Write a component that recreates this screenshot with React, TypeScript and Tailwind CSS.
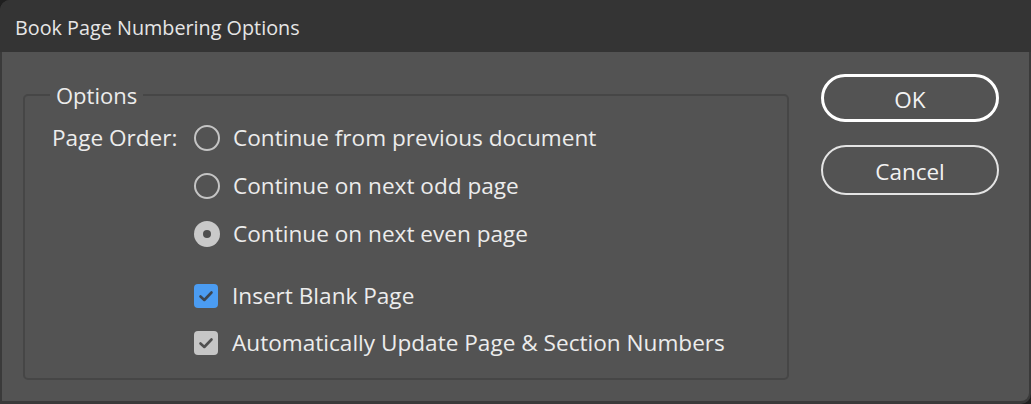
import React from "react";

const font = { fontFamily: '"Open Sans", "Noto Sans", sans-serif' };

const Radio = ({ checked }: { checked?: boolean }) =>
  checked ? (
    <span className="w-[26px] h-[26px] rounded-full bg-[#c9c9c9] flex items-center justify-center shrink-0">
      <span className="w-[8px] h-[8px] rounded-full bg-[#4e4e4e]" />
    </span>
  ) : (
    <span className="w-[26px] h-[26px] rounded-full border-2 border-[#c4c4c4] shrink-0" />
  );

const Check = ({ blue }: { blue?: boolean }) => (
  <span
    className={
      blue
        ? "w-[24px] h-[24px] rounded-[4px] bg-[#4b9cf2] flex items-center justify-center shrink-0"
        : "w-[24px] h-[24px] rounded-[4px] bg-[#c6c6c6] flex items-center justify-center shrink-0"
    }
  >
    <svg width="16" height="16" viewBox="0 0 16 16">
      <polyline
        points="2.5,8.5 6.3,12 13.5,4.5"
        fill="none"
        stroke={blue ? "#3c4550" : "#505050"}
        strokeWidth="2.6"
        strokeLinecap="round"
        strokeLinejoin="round"
      />
    </svg>
  </span>
);

export default function App() {
  return (
    <div className="w-[1031px] h-[404px] bg-[#1f1f1f] text-[#ececec]" style={font}>
      <div className="w-full h-full bg-[#3a3a3a] rounded-tl-[10px] rounded-br-[10px] flex flex-col overflow-hidden">
        <div className="h-[52px] bg-[#343434] flex items-center pl-[15px] pt-[4px] text-[19.8px] text-[#e6e6e6] shrink-0">
          Book Page Numbering Options
        </div>
        <div className="flex-1 mx-[2px] mb-[3px] bg-[#535353] rounded-br-[8px] flex items-start pl-[21px]">
          <fieldset className="mt-[29px] w-[766px] h-[299px] border-2 border-[#464646] rounded-[5px] p-0 m-0">
            <legend className="ml-[25px] px-[6px] text-[22px] leading-[28px]">Options</legend>
            <div className="flex pl-[27px] pt-[5px] text-[22.6px]">
              <div className="w-[142px] h-[48px] flex items-center">Page Order:</div>
              <div className="flex flex-col">
                <div className="h-[48px] flex items-center gap-[13px]">
                  <Radio />
                  <span>Continue from previous document</span>
                </div>
                <div className="h-[48px] flex items-center gap-[13px]">
                  <Radio />
                  <span>Continue on next odd page</span>
                </div>
                <div className="h-[48px] flex items-center gap-[13px]">
                  <Radio checked />
                  <span>Continue on next even page</span>
                </div>
                <div className="h-[47px] mt-[14px] flex items-center gap-[14px]">
                  <Check blue />
                  <span>Insert Blank Page</span>
                </div>
                <div className="h-[47px] flex items-center gap-[14px]">
                  <Check />
                  <span>Automatically Update Page &amp; Section Numbers</span>
                </div>
              </div>
            </div>
          </fieldset>
          <div className="ml-[32px] mt-[22px] flex flex-col gap-[23px] text-[22.5px]">
            <button className="w-[178px] h-[48px] pt-[3px] rounded-full border-[3px] border-white text-[#f2f2f2]">
              OK
            </button>
            <button className="w-[178px] h-[50px] pt-[3px] rounded-full border-2 border-[#e4e4e4] text-[#f2f2f2]">
              Cancel
            </button>
          </div>
        </div>
      </div>
    </div>
  );
}
